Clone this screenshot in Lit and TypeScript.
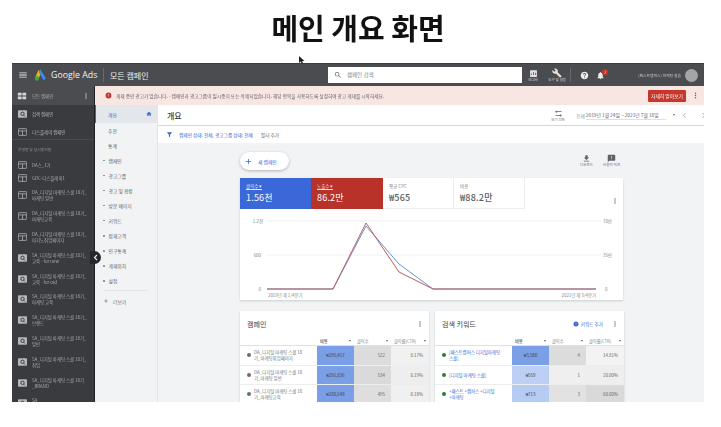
import { LitElement, html, css, svg } from "lit";
import { customElement } from "lit/decorators.js";

const ICONS: Record<string, string> = {
    search: "M15.5 14h-.79l-.28-.27A6.471 6.471 0 0 0 16 9.5 6.5 6.5 0 1 0 9.5 16c1.61 0 3.09-.59 4.23-1.57l.27.28v.79l5 4.99L20.49 19l-4.99-5zm-6 0C7.01 14 5 11.99 5 9.5S7.01 5 9.5 5 14 7.01 14 9.5 11.99 14 9.5 14z",
    wrench: "M22.7 19l-9.1-9.1c.9-2.3.4-5-1.5-6.9-2-2-5-2.4-7.4-1.3L9 6 6 9 1.6 4.7C.4 7.1.9 10.1 2.9 12.1c1.9 1.9 4.6 2.4 6.9 1.5l9.1 9.1c.4.4 1 .4 1.4 0l2.3-2.3c.5-.4.5-1.1.1-1.4z",
    help: "M12 2C6.48 2 2 6.48 2 12s4.48 10 10 10 10-4.48 10-10S17.52 2 12 2zm1 17h-2v-2h2v2zm2.07-7.75l-.9.92C13.45 12.9 13 13.5 13 15h-2v-.5c0-1.1.45-2.1 1.17-2.83l1.24-1.26c.37-.36.59-.86.59-1.41 0-1.1-.9-2-2-2s-2 .9-2 2H8c0-2.21 1.79-4 4-4s4 1.79 4 4c0 .88-.36 1.68-.93 2.25z",
    bell: "M12 22c1.1 0 2-.9 2-2h-4c0 1.1.89 2 2 2zm6-6v-5c0-3.07-1.64-5.64-4.5-6.32V4c0-.83-.67-1.5-1.5-1.5s-1.5.67-1.5 1.5v.68C7.63 5.36 6 7.92 6 11v5l-2 2v1h16v-1l-2-2z",
    download: "M19 9h-4V3H9v6H5l7 7 7-7zM5 18v2h14v-2H5z",
    feedback: "M20 2H4c-1.1 0-1.99.9-1.99 2L2 22l4-4h14c1.1 0 2-.9 2-2V4c0-1.1-.9-2-2-2zm-7 12h-2v-2h2v2zm0-4h-2V6h2v4z",
    home: "M10 20v-6h4v6h5v-8h3L12 3 2 12h3v8z",
    funnel: "M3 4h18l-7 8.5V21l-4-2v-6.500z",
    swap: "M7 11 3 7l4-4v3h13v2H7zM17 13l4 4-4 4v-3H4v-2h13z",
    report: "M3 3h18v18H3zM6 16h2v-4H6zm5 0h2V8h-2zm5 0h2v-6h-2z",
    plus: "M19 13h-6v6h-2v-6H5v-2h6V5h2v6h6z",
    grid: "M2 4h9v7H2zM13 4h9v7h-9zM2 13h9v7H2zM13 13h9v7h-9z",
    menu: "M3 18h18v-2H3zM3 13h18v-2H3zM3 6v2h18V6z",
    kebab: "M12 8a2 2 0 1 0 0-4 2 2 0 0 0 0 4zm0 6a2 2 0 1 0 0-4 2 2 0 0 0 0 4zm0 6a2 2 0 1 0 0-4 2 2 0 0 0 0 4z",
    error: "M12 2a10 10 0 1 0 0 20 10 10 0 0 0 0-20zm1 15h-2v-2h2zm0-4h-2V7h2z",
};

const icon = (name: string, size: number, color: string) => html`
    <svg width=${size} height=${size} viewBox="0 0 24 24" fill=${color} style="flex:none">
        <path d=${ICONS[name]}></path>
    </svg>
`;

const chevron = (d: string) => html`
    <svg width="5" height="7" viewBox="0 0 5 7" style="flex:none">
        <path d=${d} fill="none" stroke="#9aa0a6" stroke-width="0.800"></path>
    </svg>
`;

const searchTile = html`
    <svg class="tile" viewBox="0 0 24 20" width="9" height="8">
        <rect width="24" height="20" rx="2" fill="#b6b7b9"></rect>
        <circle cx="12" cy="9.500" r="4.500" fill="none" stroke="#3a3b3e" stroke-width="2.500"></circle>
        <path d="M15 13l3.500 3.500" stroke="#3a3b3e" stroke-width="2.500"></path>
    </svg>
`;
const displayTile = html`
    <svg class="tile" viewBox="0 0 24 20" width="9" height="8">
        <rect x="1" y="1" width="22" height="18" rx="2" fill="none" stroke="#b6b7b9" stroke-width="2"></rect>
        <path d="M1 7h22M12 7v12" stroke="#b6b7b9" stroke-width="2"></path>
    </svg>
`;

const CAMPAIGNS: [string, string, boolean][] = [
    ["DA스_1기", "", false],
    ["GDC-디스플레이1", "", false],
    ["DA_디지털 마케팅 스쿨 18기_", "마케팅 일반", false],
    ["DA_디지털 마케팅 스쿨 18기_", "마케팅교육", false],
    ["DA_디지털 마케팅 스쿨 18기_", "마지노취업페이지", false],
    ["SA_디지털 마케팅 스쿨 18기_", "교육 - for new", true],
    ["SA_디지털 마케팅 스쿨 18기_", "교육 - for old", true],
    ["SA_디지털 마케팅 스쿨 18기_", "마케팅 교육", true],
    ["SA_디지털 마케팅 스쿨 18기_", "브랜드", true],
    ["SA_디지털 마케팅 스쿨 18기_", "일반", true],
    ["SA_디지털 마케팅 스쿨 18기_", "취업", true],
    ["SA_디지털 마케팅 스쿨 18기", "_BRAND", true],
    ["SA_", " ", true],
];

const NAV = ["캠페인", "광고그룹", "광고 및 확장", "방문 페이지", "키워드", "잠재고객", "인구통계", "게재위치", "설정"];

type Row = { name: string[]; dot: string; cost: string; clicks: string; ctr: string; costBg: string; clickBg: string; ctrBg: string };

const CAMPAIGN_ROWS: Row[] = [
    { name: ["DA_디지털 마케팅 스쿨 18", "기_마케팅취업페이지"], dot: "#6d6e70", cost: "₩295,417", clicks: "522", ctr: "0.17%", costBg: "#7b9fe6", clickBg: "#dcdcdc", ctrBg: "#f1f1f1" },
    { name: ["DA_디지털 마케팅 스쿨 18", "기_마케팅 일반"], dot: "#6d6e70", cost: "₩291,836", clicks: "534", ctr: "0.19%", costBg: "#7b9fe6", clickBg: "#dadada", ctrBg: "#eeeeee" },
    { name: ["DA_디지털 마케팅 스쿨 18", "기_마케팅교육"], dot: "#6d6e70", cost: "₩288,648", clicks: "495", ctr: "0.18%", costBg: "#7b9fe6", clickBg: "#dedede", ctrBg: "#f0f0f0" },
];
const KEYWORD_ROWS: Row[] = [
    { name: ["[패스트캠퍼스 디지털마케팅", "스쿨]"], dot: "#2f7d32", cost: "₩3,580", clicks: "4", ctr: "14.81%", costBg: "#7b9fe6", clickBg: "#dcdcdc", ctrBg: "#f3f3f3" },
    { name: ["[디지털 마케팅 스쿨]"], dot: "#2f7d32", cost: "₩559", clicks: "1", ctr: "20.00%", costBg: "#bcd0f5", clickBg: "#efefef", ctrBg: "#eeeeee" },
    { name: ["+패스트 +캠퍼스 +디지털", "+마케팅"], dot: "#2f7d32", cost: "₩713", clicks: "3", ctr: "60.00%", costBg: "#b6ccf4", clickBg: "#e2e2e2", ctrBg: "#d9d9d9" },
];

@customElement("app-root")
export class AppRoot extends LitElement {
    static override styles = css`
        :host {
            display: block;
            width: 721px;
            height: 427px;
            background: #fff;
            overflow: hidden;
            position: relative;
            font-family: "Noto Sans CJK KR", "Noto Sans", "Liberation Sans", sans-serif;
            color: #3c4043;
        }
        h1 {
            margin: 0;
            height: 63px;
            box-sizing: border-box;
            padding: 8px 5px 0 0;
            text-align: center;
            font-size: 29px;
            line-height: 38px;
            font-weight: 700;
            color: #111;
            filter: blur(0.3px);
        }
        .cursor {
            position: absolute;
            left: 299px;
            top: 56px;
        }
        .frame {
            margin-left: 12px;
            width: 692px;
            height: 339px;
            overflow: hidden;
            display: flex;
            flex-direction: column;
            position: relative;
            filter: blur(0.5px);
        }
        header {
            height: 23px;
            flex: none;
            background: #4b4c4f;
            border-top: 1px solid #3b3c3e;
            box-sizing: border-box;
            display: flex;
            align-items: center;
            color: #fff;
            padding-left: 6px;
        }
        .logo {
            margin-left: 6px;
        }
        .brand {
            font-family: "Open Sans", "Liberation Sans", sans-serif;
            font-size: 8.8px;
            margin-left: 4px;
            width: 52px;
            color: #f1f1f1;
        }
        .vline {
            width: 1px;
            height: 14px;
            background: #68696c;
        }
        .crumb {
            font-size: 8px;
            margin-left: 6px;
            width: 218px;
            color: #eee;
        }
        .search {
            width: 194px;
            height: 16px;
            background: #fff;
            display: flex;
            align-items: center;
            gap: 5px;
            padding-left: 6px;
            box-sizing: border-box;
            font-size: 5.5px;
            color: #80868b;
        }
        .tool {
            display: flex;
            flex-direction: column;
            align-items: center;
            font-size: 3.5px;
            line-height: 4px;
            color: #ddd;
            width: 20px;
        }
        .account {
            font-size: 3.8px;
            color: #ccc;
            margin-left: auto;
            margin-right: 4px;
        }
        .avatar {
            width: 13px;
            height: 13px;
            border-radius: 50%;
            background: #a4a5a7;
            margin-right: 6px;
        }
        .badge-wrap {
            position: relative;
            display: flex;
        }
        .badge {
            position: absolute;
            right: -3px;
            top: -2px;
            width: 6px;
            height: 6px;
            border-radius: 50%;
            background: #c5372c;
            color: #fff;
            font-size: 4px;
            line-height: 6px;
            text-align: center;
        }
        .below {
            flex: 1;
            display: flex;
            min-height: 0;
        }
        aside {
            width: 83px;
            flex: none;
            background: #3a3b3e;
            border-right: 1px solid #1e1f21;
            box-sizing: border-box;
            color: #a9aaac;
            font-size: 4.4px;
            overflow: hidden;
        }
        .all {
            height: 19px;
            background: #4b4c4f;
            display: flex;
            align-items: center;
            padding: 0 4px 0 5px;
            gap: 5px;
        }
        .all span {
            flex: 1;
        }
        .side-top {
            border-bottom: 1px solid #4a4b4e;
            height: 35px;
            box-sizing: border-box;
        }
        .side-row {
            height: 18px;
            display: flex;
            align-items: center;
            gap: 5px;
            padding-left: 6px;
            color: #b4b5b7;
        }
        .side-label {
            height: 18px;
            line-height: 19px;
            padding-left: 6px;
            font-size: 3.8px;
            color: #8f9092;
        }
        .camp {
            display: flex;
            align-items: center;
            gap: 5px;
            height: 20.800px;
            padding-left: 6px;
            line-height: 6px;
            white-space: pre;
        }
        .camp.short {
            height: 13.500px;
        }
        .tile {
            flex: none;
        }
        .right {
            flex: 1;
            display: flex;
            flex-direction: column;
            min-width: 0;
        }
        .notice {
            height: 19px;
            flex: none;
            background: #f8e6e3;
            display: flex;
            align-items: center;
            padding-left: 10px;
            gap: 4px;
            font-size: 4.7px;
            color: #5f6368;
        }
        .notice span {
            flex: 1;
        }
        .learn {
            background: #c5372c;
            color: #fff;
            width: 38px;
            height: 12px;
            line-height: 12px;
            text-align: center;
            font-size: 4.800px;
            border-radius: 1px;
        }
        .work {
            flex: 1;
            display: flex;
            min-height: 0;
        }
        nav {
            width: 63px;
            flex: none;
            background: #f1f3f4;
            border-right: 1px solid #e4e5e7;
            box-sizing: border-box;
            font-size: 4.8px;
            color: #5f6368;
        }
        .nav-on {
            height: 18px;
            background: #e3e6ea;
            border-left: 1px solid #3367d6;
            display: flex;
            align-items: center;
            justify-content: space-between;
            padding: 0 5px 0 12px;
            color: #3367d6;
        }
        .nav-plain {
            height: 15px;
            line-height: 15px;
            padding-left: 13px;
        }
        .nav-item {
            height: 15.050px;
            display: flex;
            align-items: center;
            gap: 4px;
            padding-left: 8px;
        }
        .nav-item::before {
            content: "";
            width: 1.500px;
            height: 1.500px;
            border-radius: 50%;
            background: #80868b;
        }
        .nav-more {
            margin: 2px 9px 0 8px;
            border-top: 1px solid #e3e4e6;
            padding-top: 3px;
            display: flex;
            align-items: center;
            gap: 4px;
            height: 14px;
        }
        main {
            flex: 1;
            min-width: 0;
            background: #f1f3f4;
            display: flex;
            flex-direction: column;
        }
        .title {
            height: 21px;
            flex: none;
            box-sizing: border-box;
            background: #fff;
            border-bottom: 1px solid #d5d6d8;
            display: flex;
            align-items: center;
            padding-left: 9px;
            font-size: 8px;
            color: #3c4043;
        }
        .title b {
            font-weight: 500;
            width: 379px;
            flex: none;
        }
        .view {
            display: flex;
            flex-direction: column;
            align-items: center;
            width: 24px;
            flex: none;
            font-size: 3.5px;
            line-height: 4px;
            color: #70757a;
        }
        .range {
            font-size: 4.800px;
            color: #5f6368;
            margin-left: 6px;
            display: flex;
            gap: 3px;
            align-items: center;
            white-space: nowrap;
        }
        .range i {
            font-style: normal;
            color: #9aa0a6;
        }
        .range .all-time {
            margin-right: -2px;
        }
        .range em {
            font-style: normal;
            border-bottom: 1px solid #e0e0e0;
            padding-bottom: 1px;
            width: 80px;
            display: inline-block;
        }
        .filter {
            height: 17px;
            flex: none;
            background: #fff;
            display: flex;
            align-items: center;
            padding-left: 8px;
            gap: 6px;
            font-size: 4.7px;
            color: #3367d6;
        }
        .filter .add {
            color: #5f6368;
            margin-left: 2px;
        }
        .body {
            flex: 1;
            padding: 0 81px 0 82px;
            min-height: 0;
        }
        .actions {
            height: 35px;
            display: flex;
            justify-content: space-between;
            align-items: center;
        }
        .pill {
            background: #fff;
            border-radius: 9px;
            width: 49px;
            height: 18px;
            display: flex;
            align-items: center;
            gap: 5px;
            padding-left: 4px;
            box-sizing: border-box;
            font-size: 4.8px;
            color: #3367d6;
            margin-top: 1px;
            box-shadow: 0 1px 3px rgba(60, 64, 67, 0.35);
        }
        .act-right {
            display: flex;
            gap: 6px;
            margin-right: 2px;
        }
        .act {
            width: 19px;
            display: flex;
            flex-direction: column;
            align-items: center;
            font-size: 3.6px;
            line-height: 4px;
            color: #70757a;
        }
        .card {
            background: #fff;
            box-shadow: 0 1px 2px rgba(60, 64, 67, 0.2);
        }
        .metrics {
            display: flex;
            height: 31px;
            position: relative;
        }
        .metric {
            width: 71px;
            box-sizing: border-box;
            padding: 5px 0 0 6px;
            border-right: 1px solid #eceded;
            border-bottom: 1px solid #eceded;
            font-size: 4.5px;
            color: #80868b;
        }
        .metric.blue {
            background: #3b68d8;
            color: #dfe7fa;
            border: 0;
        }
        .metric.red {
            background: #b8322a;
            color: #f6dfdd;
            border: 0;
            width: 72px;
        }
        .metric u {
            text-decoration: none;
            border-bottom: 1px solid currentColor;
        }
        .metric div {
            font-size: 9px;
            line-height: 14px;
            margin-top: 2px;
            letter-spacing: 0.2px;
            color: #5a5d60;
            font-weight: 500;
        }
        .metric.blue div,
        .metric.red div {
            color: #fff;
            font-weight: 400;
        }
        .metrics .more {
            position: absolute;
            right: 4px;
            top: 8px;
        }
        .chart {
            display: block;
            font-size: 4.4px;
        }
        .tables {
            display: grid;
            grid-template-columns: 189px 189px;
            gap: 6px;
            margin-top: 11px;
            height: 91px;
        }
        .table-card {
            overflow: hidden;
        }
        .t-head {
            height: 26px;
            display: flex;
            align-items: center;
            padding: 0 5px 0 7px;
            font-size: 7px;
            color: #3c4043;
        }
        .t-head span {
            flex: 1;
        }
        .t-add {
            display: flex;
            align-items: center;
            gap: 2px;
            font-size: 4.6px;
            color: #3367d6;
            margin-right: 8px;
        }
        .grid-row {
            display: grid;
            grid-template-columns: 77px 37px 37px 38px;
        }
        .cols {
            height: 8px;
            font-size: 4.2px;
            color: #80868b;
            border-bottom: 1px solid #dfe0e2;
        }
        .cols div {
            display: flex;
            justify-content: space-between;
            align-items: center;
            padding: 0 2px 0 3px;
            margin-right: 1px;
            border-bottom: 1px solid #dfe0e2;
            height: 8px;
        }
        .cols div:first-child {
            border: 0;
        }
        .cols .strong {
            color: #3c4043;
            font-weight: 500;
        }
        .caret {
            width: 0;
            height: 0;
            border: 1.500px solid transparent;
            border-top: 2px solid #5f6368;
            border-bottom: 0;
        }
        .data {
            height: 18.500px;
            font-size: 4.4px;
            border-bottom: 1px solid #eceded;
        }
        .name {
            display: flex;
            align-items: center;
            gap: 3px;
            padding-left: 7px;
            line-height: 6px;
            color: #70757a;
            white-space: nowrap;
        }
        .name.link {
            color: #3367d6;
        }
        .dot {
            width: 4px;
            height: 4px;
            border-radius: 50%;
            flex: none;
        }
        .num {
            display: flex;
            align-items: center;
            justify-content: flex-end;
            padding-right: 6px;
            color: #5f6368;
        }
        .num.cost {
            color: #3c4043;
            justify-content: center;
            padding: 0;
        }
        .collapse {
            position: absolute;
            left: 78px;
            top: 188px;
            width: 11px;
            height: 13px;
            border-radius: 0 7px 7px 0;
            background: #26272a;
            display: flex;
            align-items: center;
            justify-content: center;
        }
    `;

    private renderChart() {
        const grid = [221, 255];
        return html`
            <svg class="chart" width="384" height="91" viewBox="239 209 384 91">
                ${grid.map(
                    (y) => svg`<line x1="266" x2="600" y1=${y} y2=${y} stroke="#eeeff0" stroke-width="1"></line>`,
                )}
                <polyline points="266,289 332,289 365,226 398,264 432,289 595,289" fill="none" stroke="#6f93dc" stroke-width="1"></polyline>
                <polyline points="266,289 332,289 365,223 398,272 432,289 595,289" fill="none" stroke="#b5605a" stroke-width="1"></polyline>
                <g fill="#80868b" font-size="4.400">
                    <text x="262" y="222.500" text-anchor="end">1.2천</text>
                    <text x="260" y="256.500" text-anchor="end">600</text>
                    <text x="260" y="290.500" text-anchor="end">0</text>
                    <text x="602" y="222.500">70만</text>
                    <text x="602" y="256.500">35만</text>
                    <text x="604" y="290.500">0</text>
                    <text x="267" y="297">2019년 제 1/4분기</text>
                    <text x="595" y="297" text-anchor="end">2021년 제 3/4분기</text>
                </g>
            </svg>
        `;
    }

    private renderTable(title: string, rows: Row[], link: boolean) {
        return html`
            <section class="card table-card">
                <div class="t-head">
                    <span>${title}</span>
                    ${link
                        ? html`<div class="t-add">${icon("error", 6, "#3367d6")}키워드 추가</div>`
                        : ""}
                    ${icon("kebab", 8, "#5f6368")}
                </div>
                <div class="grid-row cols">
                    <div></div>
                    <div class="strong">비용<i class="caret"></i></div>
                    <div>클릭수<i class="caret"></i></div>
                    <div>클릭률(CTR)<i class="caret"></i></div>
                </div>
                ${rows.map(
                    (r) => html`
                        <div class="grid-row data">
                            <div class="name ${link ? "link" : ""}">
                                <i class="dot" style="background:${r.dot}"></i>
                                <div>${r.name.map((n) => html`${n}<br />`)}</div>
                            </div>
                            <div class="num cost" style="background:${r.costBg}">${r.cost}</div>
                            <div class="num" style="background:${r.clickBg}">${r.clicks}</div>
                            <div class="num" style="background:${r.ctrBg}">${r.ctr}</div>
                        </div>
                    `,
                )}
            </section>
        `;
    }

    override render() {
        return html`
            <h1>메인 개요 화면</h1>
            <svg class="cursor" width="6" height="9" viewBox="0 0 6 9">
                <path d="M0 0v7l1.700-1.500L3 8.500l1.300-.5-1.200-3H5.500z" fill="#222"></path>
            </svg>
            <div class="frame">
                <header>
                    ${icon("menu", 10, "#e8e8e8")}
                    <svg class="logo" width="13" height="12" viewBox="0 0 13 12">
                        <path d="M4.500 1 1 9l3 2 3-7z" fill="#f4b400"></path>
                        <path d="M6.500 0.500 12 9.500l-2.500 1.800L4.800 3z" fill="#4285f4"></path>
                        <circle cx="3" cy="9.500" r="2.200" fill="#34a853"></circle>
                    </svg>
                    <div class="brand">Google Ads</div>
                    <div class="vline"></div>
                    <div class="crumb">모든 캠페인</div>
                    <div class="search">${icon("search", 8, "#5f6368")}<span>캠페인 검색</span></div>
                    <div class="tool" style="margin-left:1px">${icon("report", 9, "#e4e4e4")}<span>보고서</span></div>
                    <div class="tool" style="margin-left:4px">${icon("wrench", 10, "#e4e4e4")}<span>도구 및 설정</span></div>
                    <div class="vline" style="margin-left:3px"></div>
                    <div style="margin-left:9px;display:flex">${icon("help", 9, "#ececec")}</div>
                    <div class="badge-wrap" style="margin-left:7px">
                        ${icon("bell", 9, "#ececec")}<i class="badge">!</i>
                    </div>
                    <div class="account">(패스트캠퍼스) 마케팅 실습</div>
                    <div class="avatar"></div>
                </header>
                <div class="below">
                    <aside>
                        <div class="all">
                            ${icon("grid", 10, "#d8d8d8")}<span>모든 캠페인</span>${icon("kebab", 8, "#d8d8d8")}
                        </div>
                        <div class="side-top">
                            <div class="side-row">${searchTile}<span>검색 캠페인</span></div>
                            <div class="side-row">${displayTile}<span>디스플레이 캠페인</span></div>
                        </div>
                        <div class="side-label">운영중 및 일시중지됨</div>
                        ${CAMPAIGNS.map(
                            ([a, b, isSearch]) => html`
                                <div class="camp ${b ? "" : "short"}">
                                    ${isSearch ? searchTile : displayTile}
                                    <div>${a}${b ? html`<br />${b}` : ""}</div>
                                </div>
                            `,
                        )}
                    </aside>
                    <div class="right">
                        <div class="notice">
                            ${icon("error", 7, "#c5372c")}
                            <span>게재 중인 광고가 없습니다. - 캠페인과 광고그룹이 일시중지 또는 삭제되었습니다. 해당 항목을 사용하도록 설정하여 광고 게재를 시작하세요.</span>
                            <div class="learn">자세히 알아보기</div>
                            <div style="display:flex;margin:0 4px 0 1px">${icon("kebab", 9, "#5f6368")}</div>
                        </div>
                        <div class="work">
                            <nav>
                                <div class="nav-on">개요 ${icon("home", 6, "#3367d6")}</div>
                                <div class="nav-plain">추천</div>
                                <div class="nav-plain">통계</div>
                                ${NAV.map((n) => html`<div class="nav-item">${n}</div>`)}
                                <div class="nav-more">${icon("plus", 6, "#5f6368")}더보기</div>
                            </nav>
                            <main>
                                <div class="title">
                                    <b>개요</b>
                                    <div class="view">${icon("swap", 9, "#5f6368")}<span>보기 전환</span></div>
                                    <div class="range">
                                        <i class="all-time">전체</i><em>2019년 1월 24일 ~ 2021년 7월 18일</em>
                                        <i class="caret" style="margin:0 4px"></i>
                                        ${chevron("M3.500 1 1.500 3.500 3.500 6")}
                                        <span style="width:8px"></span>
                                        ${chevron("M1.500 1 3.500 3.500 1.500 6")}
                                    </div>
                                </div>
                                <div class="filter">
                                    ${icon("funnel", 7, "#3367d6")}
                                    <span>캠페인 상태: 전체, 광고그룹 상태: 전체</span>
                                    <span class="add">필터 추가</span>
                                </div>
                                <div class="body">
                                    <div class="actions">
                                        <div class="pill">${icon("plus", 9, "#3367d6")}새 캠페인</div>
                                        <div class="act-right">
                                            <div class="act">${icon("download", 9, "#5f6368")}<span>다운로드</span></div>
                                            <div class="act">${icon("feedback", 9, "#5f6368")}<span>사용자 의견</span></div>
                                        </div>
                                    </div>
                                    <section class="card">
                                        <div class="metrics">
                                            <div class="metric blue"><u>클릭수 ▾</u><div>1.56천</div></div>
                                            <div class="metric red"><u>노출수 ▾</u><div>86.2만</div></div>
                                            <div class="metric">평균 CPC<div>₩565</div></div>
                                            <div class="metric">비용<div>₩88.2만</div></div>
                                            <div class="more">${icon("kebab", 8, "#5f6368")}</div>
                                        </div>
                                        ${this.renderChart()}
                                    </section>
                                    <div class="tables">
                                        ${this.renderTable("캠페인", CAMPAIGN_ROWS, false)}
                                        ${this.renderTable("검색 키워드", KEYWORD_ROWS, true)}
                                    </div>
                                </div>
                            </main>
                        </div>
                    </div>
                </div>
                <div class="collapse">
                    <svg width="5" height="7" viewBox="0 0 5 7"><path d="M4 1 1.500 3.500 4 6" fill="none" stroke="#e8e8e8" stroke-width="1.200"></path></svg>
                </div>
            </div>
        `;
    }
}
